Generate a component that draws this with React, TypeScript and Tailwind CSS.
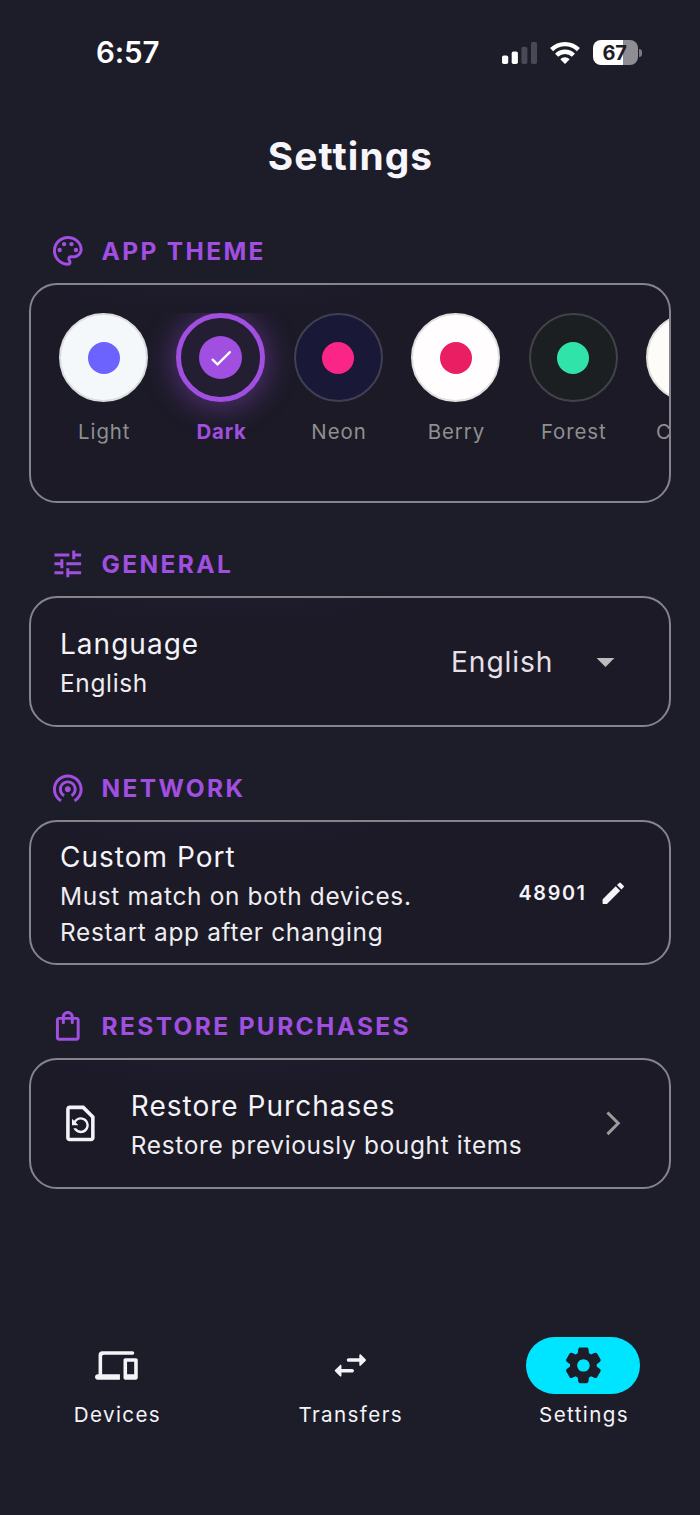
import React from "react";
import {
  MdArrowDropDown,
  MdArrowForwardIos,
  MdOutlinePalette,
  MdOutlineRestorePage,
  MdOutlineShoppingBag,
  MdTune,
  MdWifiTethering,
} from "react-icons/md";

const DEVICES =
  "M4 7c0-.55.45-1 1-1h16c.55 0 1-.45 1-1s-.45-1-1-1H4c-1.1 0-2 .9-2 2v11h-.5c-.83 0-1.5.67-1.5 1.5S.67 20 1.5 20H14v-3H4V7zm19 1h-6c-.55 0-1 .45-1 1v10c0 .55.45 1 1 1h6c.55 0 1-.45 1-1V9c0-.55-.45-1-1-1zm-1 9h-4v-7h4v7z";
const SWAP =
  "M6.14 11.86l-2.78 2.79c-.19.2-.19.51 0 .71l2.78 2.79c.31.32.85.09.85-.35V16H13c.55 0 1-.45 1-1s-.45-1-1-1H6.99v-1.79c0-.45-.54-.67-.85-.35zm14.51-3.21l-2.78-2.79c-.31-.32-.85-.09-.85.35V8H11c-.55 0-1 .45-1 1s.45 1 1 1h6.01v1.79c0 .45.54.67.85.35l2.78-2.79c.2-.19.2-.51.01-.7z";
const GEAR =
  "M19.5 12c0-.23-.01-.45-.03-.68l1.86-1.41c.4-.3.51-.86.26-1.3l-1.87-3.23c-.25-.44-.79-.62-1.25-.42l-2.15.91c-.37-.26-.76-.49-1.17-.68l-.29-2.31c-.06-.5-.49-.88-.99-.88h-3.73c-.51 0-.94.38-1 .88l-.29 2.31c-.41.19-.8.42-1.17.68l-2.15-.91c-.46-.2-1-.02-1.25.42L2.41 8.62c-.25.44-.14.99.26 1.3l1.86 1.41a7.343 7.343 0 0 0 0 1.35l-1.86 1.41c-.4.3-.51.86-.26 1.3l1.87 3.23c.25.44.79.62 1.25.42l2.15-.91c.37.26.76.49 1.17.68l.29 2.31c.06.5.49.88.99.88h3.73c.5 0 .93-.38.99-.88l.29-2.31c.41-.19.8-.42 1.17-.68l2.15.91c.46.2 1 .02 1.25-.42l1.87-3.23c.25-.44.14-.99-.26-1.3l-1.86-1.41c.03-.23.04-.45.04-.68zm-7.46 3.5c-1.93 0-3.5-1.57-3.5-3.5s1.57-3.5 3.5-3.5 3.5 1.57 3.5 3.5-1.57 3.5-3.5 3.5z";
const PENCIL =
  "M3 17.46v3.04c0 .28.22.5.5.5h3.04c.13 0 .26-.05.35-.15L17.81 9.94l-3.75-3.75L3.15 17.1c-.1.1-.15.22-.15.36zM20.71 7.04a.996.996 0 0 0 0-1.41l-2.34-2.34a.996.996 0 0 0-1.41 0l-1.83 1.83 3.75 3.75 1.83-1.83z";
const CHECK =
  "M9 16.17L5.53 12.7a.996.996 0 1 0-1.41 1.41l4.18 4.18c.39.39 1.02.39 1.41 0L20.29 7.71a.996.996 0 1 0-1.41-1.41L9 16.17z";

function Glyph({ d, className }: { d: string; className: string }) {
  return (
    <svg viewBox="0 0 24 24" fill="currentColor" className={className}>
      <path d={d} />
    </svg>
  );
}

function StatusBar() {
  return (
    <div className="flex h-[105px] shrink-0 items-center justify-between pr-[58px] pl-24">
      <span className="pt-px text-[29.5px] leading-none font-semibold tracking-[-0.1px] text-white">6:57</span>
      <div className="flex items-center">
        <svg viewBox="0 0 36 24" className="h-6 w-9" fill="#fff">
          <rect x="0" y="14.5" width="6.2" height="8.5" rx="1.8" />
          <rect x="9.7" y="10.5" width="6.2" height="12.5" rx="1.8" />
          <rect x="19.4" y="5.8" width="6" height="17.2" rx="1.8" fill="#494855" />
          <rect x="29" y="1" width="6" height="22" rx="1.8" fill="#494855" />
        </svg>
        <svg viewBox="0 0 30 24" className="ml-3 h-6 w-[30px]" fill="none" stroke="#fff" strokeWidth="4.4">
          <path d="M1.6 8.6a19.2 19.2 0 0 1 26.8 0" />
          <path d="M6.6 14.2a11.9 11.9 0 0 1 16.8 0" />
          <path d="M15 23l-4.7-4.8a6.7 6.7 0 0 1 9.4 0z" fill="#fff" stroke="none" />
        </svg>
        <div className="ml-[13px] flex h-[25px] w-[45px] items-center justify-center rounded-[8px] bg-linear-to-r from-white from-67% to-[#8e8d93] to-67%">
          <span className="pr-[2px] text-[20px] leading-none font-bold tracking-[-0.2px] text-[#1d1c29]">67</span>
        </div>
        <div className="ml-px h-2 w-[3px] rounded-r-full bg-[#7b7a82]" />
      </div>
    </div>
  );
}

function SectionHeader({ icon: Icon, first, children }: { icon: React.ElementType; first?: boolean; children: string }) {
  return (
    <div
      className={`${first ? "mt-[27px]" : "mt-[43px]"} mb-[14px] ml-[21px] flex h-9 items-center gap-[16px] text-[#a04fe0]`}
    >
      <Icon className="size-[35.6px]" />
      <h2 className="text-[24.5px] leading-9 font-bold tracking-[2.35px] whitespace-nowrap">{children}</h2>
    </div>
  );
}

const CARD =
  "flex rounded-[28px] border-2 border-[#85848c] bg-[radial-gradient(ellipse_40%_36px_at_30%_0,#1f1b2c,#1b1a26)]";

const THEMES = [
  { name: "Light", ring: "border-2 border-[#dadde0] bg-[#f4f8fb]", dot: "bg-[#6c63ff]" },
  {
    name: "Dark",
    ring: "border-[5.4px] border-[#a04fe0] bg-[#231e31] shadow-[0_3px_30px_3px_rgba(160,79,224,0.42)]",
    dot: "bg-[#a04fe0]",
    selected: true,
  },
  { name: "Neon", ring: "border-2 border-[#403f53] bg-[#191836]", dot: "bg-[#fb2588]" },
  { name: "Berry", ring: "border-2 border-[#e1dfe0] bg-[#fffdfe]", dot: "bg-[#e91e63]" },
  { name: "Forest", ring: "border-2 border-[#424347] bg-[#1b1f22]", dot: "bg-[#30e3a8]" },
  { name: "Coffee", ring: "border-2 border-[#e0deda] bg-[#fdfcf8]", dot: "bg-[#795548]" },
];

function ThemePicker() {
  return (
    <div className={`${CARD} h-[220px] overflow-hidden pt-7`}>
      <div className="flex min-w-0 flex-1 gap-[28.4px] overflow-hidden pl-7">
        {THEMES.map((t) => (
          <div key={t.name} className="flex w-[89px] shrink-0 flex-col items-center">
            <div className={`flex size-[89px] shrink-0 items-center justify-center rounded-full ${t.ring}`}>
              <div
                className={`flex items-center justify-center rounded-full ${t.selected ? "size-[43px]" : "size-[32px]"} ${t.dot}`}
              >
                {t.selected && <Glyph d={CHECK} className="size-[28px] text-white" />}
              </div>
            </div>
            <span
              className={`mt-[16px] pl-[1.5px] text-[20.4px] leading-7 ${t.selected ? "font-bold tracking-[0.8px] text-[#a04fe0]" : "tracking-[0.95px] text-[#8f8f8f]"}`}
            >
              {t.name}
            </span>
          </div>
        ))}
      </div>
    </div>
  );
}

function ItemText({ title, lines }: { title: string; lines: string[] }) {
  return (
    <div className="flex-1 pt-px pl-px whitespace-nowrap">
      <p className="text-[28px] leading-[41px] tracking-[1.02px] text-[#f4f3f8]">{title}</p>
      {lines.map((line) => (
        <p key={line} className="text-[24.4px] leading-9 tracking-[0.68px] text-[#eeedf1]">
          {line}
        </p>
      ))}
    </div>
  );
}

function NavItem({ d, label, active }: { d: string; label: string; active?: boolean }) {
  return (
    <div className="flex flex-1 flex-col items-center">
      <div
        className={`flex h-[57px] w-[114px] items-center justify-center rounded-full ${active ? "bg-[#00e5ff] text-[#1d1c29]" : "text-[#f4f3f8]"}`}
      >
        <Glyph d={d} className="size-[42.75px]" />
      </div>
      <span className="mt-[7px] pl-[1.5px] text-[20.6px] leading-7 tracking-[1.4px] text-[#f4f3f8]">{label}</span>
    </div>
  );
}

export default function App() {
  return (
    <div className="flex h-[1515px] w-[700px] flex-col overflow-hidden bg-[#1d1c29] font-['Inter',sans-serif]">
      <StatusBar />
      <h1 className="h-[101px] shrink-0 pl-px text-center text-[38.8px] leading-[101px] font-bold tracking-[1.1px] text-[#f6f5fb]">
        Settings
      </h1>
      <main className="flex-1 px-[29px]">
        <SectionHeader icon={MdOutlinePalette} first>
          APP THEME
        </SectionHeader>
        <ThemePicker />

        <SectionHeader icon={MdTune}>GENERAL</SectionHeader>
        <div className={`${CARD} h-[131px] items-center pr-[42px] pl-7`}>
          <ItemText title="Language" lines={["English"]} />
          <span className="w-[133px] pt-[2px] text-[28.2px] tracking-[0.9px] text-[#e6e0e9]">English</span>
          <MdArrowDropDown className="size-[43px] text-[#bdbdbd]" />
        </div>

        <SectionHeader icon={MdWifiTethering}>NETWORK</SectionHeader>
        <div className={`${CARD} h-[145px] items-center pt-px pr-[42px] pl-7`}>
          <ItemText title="Custom Port" lines={["Must match on both devices.", "Restart app after changing"]} />
          <span className="mr-[12px] pt-px text-[19.8px] font-semibold tracking-[1.6px] text-[#f4f3f8]">48901</span>
          <Glyph d={PENCIL} className="size-[28.5px] text-[#f4f3f8]" />
        </div>

        <SectionHeader icon={MdOutlineShoppingBag}>RESTORE PURCHASES</SectionHeader>
        <div className={`${CARD} h-[131px] items-center pr-[42px] pl-7`}>
          <MdOutlineRestorePage className="mr-7 size-[42.75px] text-[#f4f3f8]" />
          <ItemText title="Restore Purchases" lines={["Restore previously bought items"]} />
          <MdArrowForwardIos className="size-[28.5px] text-[#9b9b9b]" />
        </div>
      </main>
      <nav className="flex h-[178px] shrink-0">
        <NavItem d={DEVICES} label="Devices" />
        <NavItem d={SWAP} label="Transfers" />
        <NavItem d={GEAR} label="Settings" active />
      </nav>
    </div>
  );
}
